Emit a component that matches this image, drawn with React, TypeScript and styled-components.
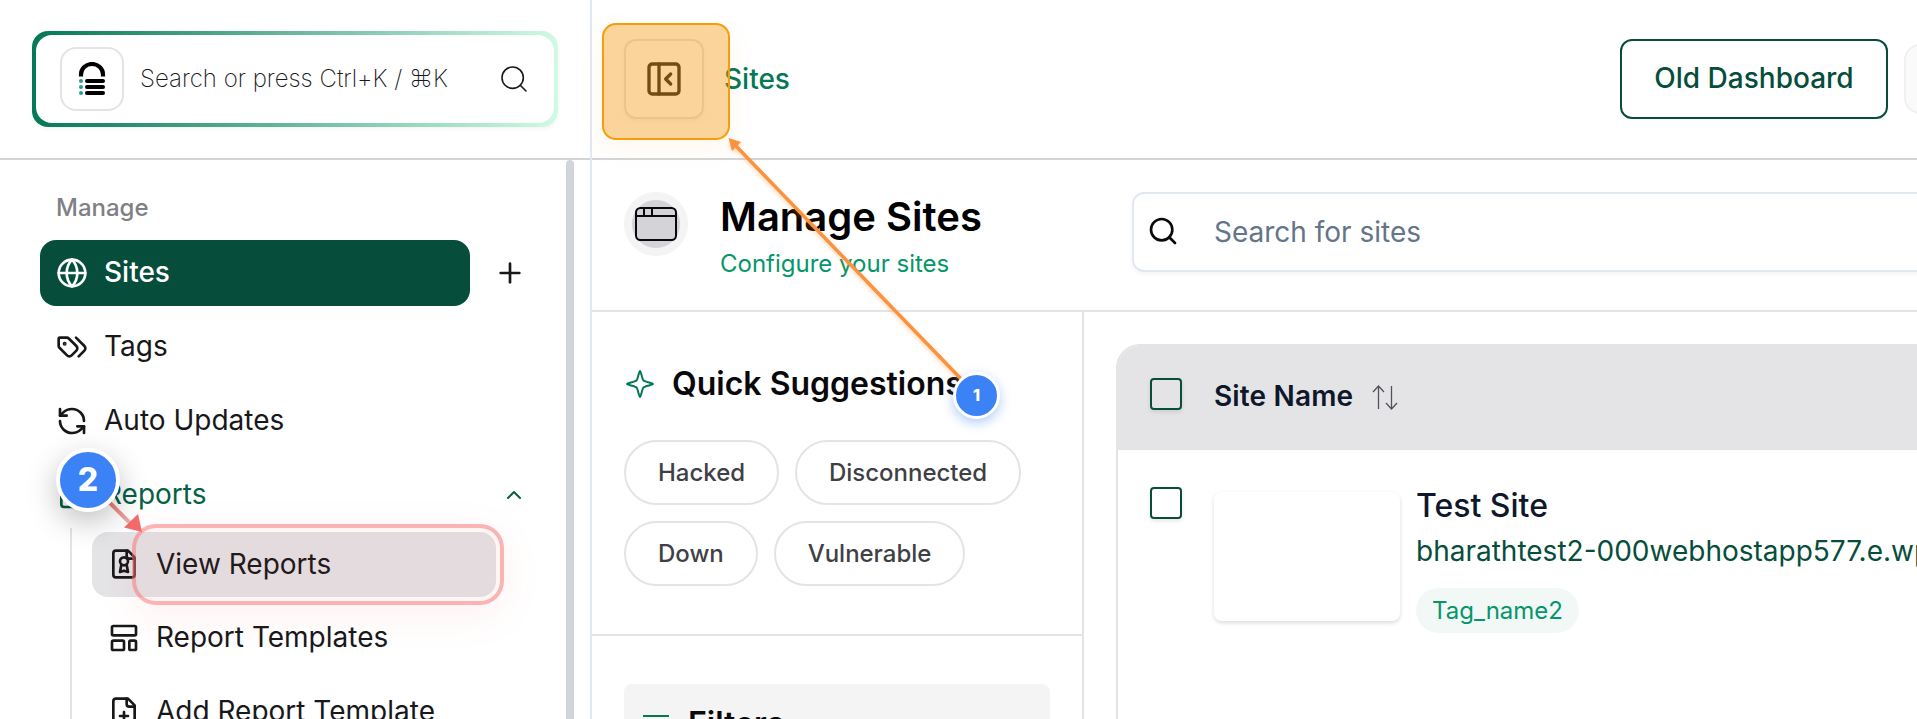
import React from 'react';
import styled, { createGlobalStyle, css } from 'styled-components';
import { Globe, RefreshCcw, Plus, ChevronUp, Search, PanelLeftClose, LayoutTemplate } from 'lucide-react';

const Global = createGlobalStyle`
  *, *::before, *::after { box-sizing: border-box; }
  html, body { margin: 0; background: #fff; }
  body {
    width: 100vw;
    height: 100vh;
    overflow: hidden;
    font-family: Inter, "Noto Sans", sans-serif;
    font-size: 28px;
    line-height: 40px;
    color: #18181b;
    -webkit-font-smoothing: antialiased;
  }
  svg { display: block; flex-shrink: 0; }
`;

const Page = styled.div`
  position: relative;
  display: flex;
  width: 100%;
  height: 719px;
  overflow: hidden;
  background: #fff;
`;

/* ---------- sidebar ---------- */
const Sidebar = styled.aside`
  display: flex;
  flex-direction: column;
  flex: none;
  width: 592px;
  height: 719px;
  border-right: 2px solid #e2e8f0;
`;

const SidebarTop = styled.div`
  flex: none;
  height: 160px;
  padding: 31px 0 0 32px;
  border-bottom: 2px solid #d4d4d8;
`;

const CommandFrame = styled.div`
  width: 526px;
  height: 96px;
  padding: 4px;
  border-radius: 16px;
  background: linear-gradient(90deg, #047857, #d1fae5);
  box-shadow: 0 2px 4px rgba(0, 0, 0, 0.05);
`;

const CommandBox = styled.div`
  display: flex;
  align-items: center;
  height: 88px;
  padding: 0 24px;
  border-radius: 16px;
  background: #fff;
`;

const LogoTile = styled.div`
  display: flex;
  align-items: center;
  justify-content: center;
  width: 64px;
  height: 64px;
  border: 2px solid #e4e4e7;
  border-radius: 16px;
`;

const CommandText = styled.span`
  flex: 1;
  margin-left: 16px;
  font-size: 24px;
  font-weight: 200;
  line-height: 32px;
  color: #18181b;
  white-space: nowrap;
`;

const SidebarBody = styled.div`
  display: flex;
  flex: 1;
  min-height: 0;
  justify-content: space-between;
  padding-right: 16px;
`;

const Nav = styled.nav`
  width: 500px;
  margin-left: 40px;
`;

const ScrollThumb = styled.div`
  width: 8px;
  height: 620px;
  border-radius: 4px;
  background: #d1d5db;
`;

const NavLabel = styled.div`
  height: 80px;
  padding: 32px 16px 0;
  font-size: 24px;
  font-weight: 500;
  line-height: 32px;
  color: #7f7f85;
`;

const NavRow = styled.div`
  display: flex;
  align-items: center;
  height: 66px;
  margin-bottom: 8px;
`;

const NavItem = styled.a<{ $active?: boolean; $open?: boolean }>`
  display: flex;
  align-items: center;
  gap: 16px;
  width: 430px;
  height: 66px;
  padding: 0 16px;
  border-radius: 16px;
  white-space: nowrap;
  ${p => p.$active && css`background: #064e3b; color: #fff; font-weight: 500;`}
  ${p => p.$open && css`color: #065f46;`}
`;

const ItemText = styled.span<{ $lift?: number }>`
  margin-bottom: ${p => p.$lift ?? 2}px;
`;

const RowAction = styled.div<{ $left: number; $green?: boolean }>`
  margin-left: ${p => p.$left}px;
  color: ${p => (p.$green ? '#065f46' : '#18181b')};
`;

const SubNav = styled.div`
  margin: -8px 0 0 30px;
  padding: 4px 0 0 20px;
  border-left: 2px solid #e4e4e7;
`;

const SubItem = styled.a<{ $selected?: boolean }>`
  display: flex;
  align-items: center;
  gap: 16px;
  width: 404px;
  height: 65px;
  margin-bottom: 9px;
  padding: 0 16px 1px;
  border-radius: 16px;
  background: ${p => (p.$selected ? '#e4e4e7' : 'transparent')};
  white-space: nowrap;
`;

/* ---------- main ---------- */
const Main = styled.main`
  display: flex;
  flex: 1;
  flex-direction: column;
  min-width: 0;
`;

const TopBar = styled.header`
  display: flex;
  align-items: center;
  flex: none;
  height: 160px;
  padding-left: 32px;
  border-bottom: 2px solid #d4d4d8;
`;

const CollapseButton = styled.div`
  display: flex;
  align-items: center;
  justify-content: center;
  width: 80px;
  height: 80px;
  border: 2px solid #e4e4e7;
  border-radius: 12px;
  box-shadow: 0 2px 4px rgba(0, 0, 0, 0.05);
`;

const Crumb = styled.span`
  margin-left: 20px;
  font-weight: 500;
  color: #047857;
`;

const OldDashboard = styled.div`
  display: flex;
  align-items: center;
  justify-content: center;
  flex: none;
  width: 268px;
  height: 80px;
  margin-left: auto;
  padding-bottom: 2px;
  border: 2px solid #064e3b;
  border-radius: 12px;
  font-weight: 500;
  color: #064e3b;
`;

const Account = styled.div`
  flex: none;
  width: 72px;
  height: 70px;
  margin: 0 -59px 0 16px;
  border: 2px solid #f0f0f1;
  border-radius: 16px;
  background: #fafafa;
`;

const TitleBar = styled.section`
  display: flex;
  flex: none;
  height: 152px;
  padding: 32px 0 0 32px;
  border-bottom: 2px solid #e4e4e7;
`;

const TitleBadge = styled.div`
  display: flex;
  align-items: center;
  justify-content: center;
  width: 64px;
  height: 64px;
  border: 8px solid #f4f4f5;
  border-radius: 50%;
  background: #d4d4d8;
`;

const Titles = styled.div`
  width: 412px;
  margin-left: 32px;
`;

const Title = styled.h1`
  margin: 1px 0 0;
  font-size: 40px;
  font-weight: 600;
  line-height: 48px;
  color: #000;
`;

const Subtitle = styled.p`
  margin: 7px 0 0;
  font-size: 24px;
  line-height: 32px;
  color: #059669;
`;

const SiteSearch = styled.div`
  display: flex;
  align-items: center;
  gap: 35px;
  flex: 1;
  height: 80px;
  margin-right: -20px;
  padding: 0 0 2px 13px;
  border: 2px solid #e2e8f0;
  border-radius: 12px;
  box-shadow: 0 2px 4px rgba(0, 0, 0, 0.05);
  color: #0a0a0a;
`;

const Placeholder = styled.span`
  margin-top: 2px;
  color: #64748b;
`;

const Columns = styled.div`
  display: flex;
  flex: 1;
  min-height: 0;
`;

const FilterColumn = styled.div`
  flex: none;
  width: 492px;
  border-right: 2px solid #e4e4e7;
`;

const Suggestions = styled.section`
  height: 324px;
  padding: 52px 32px 0;
  border-bottom: 2px solid #e4e4e7;
`;

const SectionHeading = styled.h2`
  display: flex;
  align-items: center;
  gap: 16px;
  margin: 0;
  font-size: 32px;
  font-weight: 600;
  line-height: 40px;
  color: #09090b;
`;

const Chips = styled.div`
  display: flex;
  flex-wrap: wrap;
  gap: 16px;
  margin-top: 36px;
`;

const Chip = styled.span`
  height: 65px;
  padding: 0 32px;
  border: 2px solid #e4e4e7;
  border-radius: 33px;
  font-size: 24px;
  font-weight: 500;
  line-height: 61px;
  letter-spacing: -0.02px;
  color: #3f3f46;
`;

const FiltersCard = styled.section`
  height: 120px;
  margin: 48px 32px 0;
  padding: 20px 16px;
  border-radius: 8px;
  background: #f4f4f4;
`;

const TableWrap = styled.div`
  flex: 1;
  min-width: 0;
  padding: 32px 0 0 32px;
`;

const Table = styled.div`
  width: 900px;
  height: 500px;
  overflow: hidden;
  border: 2px solid #e4e4e7;
  border-radius: 24px;
`;

const TableHead = styled.div`
  display: flex;
  align-items: center;
  height: 104px;
  padding: 0 0 2px 32px;
  background: #e4e4e6;
  font-weight: 600;
  color: #0f172a;
`;

const HeadLabel = styled.span`
  margin: 0 16px 2px 32px;
  letter-spacing: 0.15px;
`;

const Checkbox = styled.span<{ $lift?: number }>`
  flex: none;
  width: 32px;
  height: 32px;
  margin-bottom: ${p => p.$lift ?? 0}px;
  border: 2px solid #064e3b;
  border-radius: 4px;
  box-shadow: 0 2px 4px rgba(0, 0, 0, 0.1);
`;

const SiteRow = styled.div`
  display: flex;
  align-items: flex-start;
  padding: 37px 0 0 32px;
`;

const Thumb = styled.div`
  flex: none;
  width: 186px;
  height: 129px;
  margin: 5px 16px 0 32px;
  border-radius: 8px;
  box-shadow: 0 2px 4px rgba(0, 0, 0, 0.14);
`;

const SiteInfo = styled.div`
  display: flex;
  flex-direction: column;
  align-items: flex-start;
  white-space: nowrap;
`;

const SiteTitle = styled.span`
  margin-top: -3px;
  font-size: 32px;
  font-weight: 500;
  line-height: 44px;
  color: #0f172a;
`;

const SiteUrl = styled.span`
  margin-top: 3px;
  color: #064e3b;
`;

const Tag = styled.span`
  height: 45px;
  margin-top: 17px;
  padding: 0 16px;
  border-radius: 23px;
  background: #f1f8f6;
  font-size: 24px;
  line-height: 45px;
  color: #059669;
`;

/* ---------- tour overlay ---------- */
const CollapseHighlight = styled.div`
  position: absolute;
  left: 602px;
  top: 23px;
  width: 128px;
  height: 117px;
  border: 2px solid #f59e0b;
  border-radius: 14px;
  background: rgba(245, 150, 11, 0.41);
  box-shadow: 0 8px 24px rgba(245, 158, 11, 0.08);
`;

const ReportsHighlight = styled.div`
  position: absolute;
  left: 132px;
  top: 524px;
  width: 372px;
  height: 81px;
  border: 4px solid rgba(248, 113, 113, 0.5);
  border-radius: 24px;
  background: rgba(239, 68, 68, 0.05);
  box-shadow: 0 10px 40px rgba(239, 68, 68, 0.08);
`;

const Arrows = styled.svg`
  position: absolute;
  left: 0;
  top: 0;
  pointer-events: none;
`;

const Marker = styled.div<{ $x: number; $y: number; $size: number; $ring: number; $font: number; $shadow: string }>`
  position: absolute;
  left: ${p => p.$x - p.$size / 2}px;
  top: ${p => p.$y - p.$size / 2}px;
  display: flex;
  align-items: center;
  justify-content: center;
  width: ${p => p.$size}px;
  height: ${p => p.$size}px;
  border: ${p => p.$ring}px solid #fff;
  border-radius: 50%;
  background: #3b82f6;
  box-shadow: ${p => p.$shadow};
  font-size: ${p => p.$font}px;
  font-weight: 800;
  line-height: 1;
  color: #fff;
`;

const LockLogo = () => (
  <svg width="28" height="34" viewBox="0 0 28 34">
    <path d="M3 14.5V12.5a11 10.5 0 0 1 22 0v2" fill="none" stroke="#000" strokeWidth="4.2" />
    {[19, 25, 31].map(y => (
      <g key={y}>
        <rect x="7" y={y - 2} width="20" height="4" rx="2" fill="#000" />
        <circle cx="3" cy={y} r="2" fill="#2a9d8f" />
      </g>
    ))}
  </svg>
);

const WindowIcon = () => (
  <svg width="42" height="34" viewBox="0 0 42 34" fill="none" stroke="#09090b" strokeWidth="2">
    <rect x="1" y="1" width="40" height="32" rx="4.5" />
    <path d="M1 9H41M9 1V9M17 1V9" />
  </svg>
);

const TagsIcon = () => (
  <svg width="32" height="32" viewBox="0 0 24 24" fill="none" stroke="currentColor" strokeWidth="2" strokeLinecap="round" strokeLinejoin="round">
    <path d="m15 5 6.3 6.3a2.4 2.4 0 0 1 0 3.4L17 19" />
    <path d="M9.586 5.586A2 2 0 0 0 8.172 5H3a1 1 0 0 0-1 1v5.172a2 2 0 0 0 .586 1.414L8.29 18.290a2.426 2.426 0 0 0 3.420 0l3.580-3.580a2.426 2.426 0 0 0 0-3.420z" />
    <circle cx="6.5" cy="9.5" r=".5" fill="currentColor" />
  </svg>
);

const FileBadge = () => (
  <svg width="32" height="32" viewBox="0 0 24 24" fill="none" stroke="currentColor" strokeWidth="2" strokeLinecap="round" strokeLinejoin="round">
    <path d="M15 2H6a2 2 0 0 0-2 2v16a2 2 0 0 0 2 2h12a2 2 0 0 0 2-2V7Z" />
    <path d="M14 2v4a2 2 0 0 0 2 2h4" />
    <circle cx="12" cy="10" r="3" />
    <path d="m14 12.500 1 5.500-3-1-3 1 1-5.500" />
  </svg>
);

const FileAdd = () => (
  <svg width="32" height="32" viewBox="0 0 24 24" fill="none" stroke="currentColor" strokeWidth="2" strokeLinecap="round" strokeLinejoin="round">
    <path d="M15 2H6a2 2 0 0 0-2 2v16a2 2 0 0 0 2 2h12a2 2 0 0 0 2-2V7Z" />
    <path d="M14 2v4a2 2 0 0 0 2 2h4M9 15h6M12 12v6" />
  </svg>
);

const ReportIcon = () => (
  <svg width="32" height="32" viewBox="0 0 24 24" fill="none" stroke="currentColor" strokeWidth="2" strokeLinecap="round" strokeLinejoin="round">
    <rect x="4" y="3" width="17" height="18" rx="2" />
    <path d="M8 17v-5M12 17V8M16 17v-3" />
  </svg>
);

const Spark = () => (
  <svg width="32" height="32" viewBox="0 0 32 32" fill="none" stroke="#047857" strokeWidth="2" strokeLinejoin="round">
    <path d="M16 3C17 3 18 11 19.500 12.500S29 15 29 16S21 18 19.500 19.500S17 29 16 29S14 21 12.500 19.500S3 17 3 16S11 14 12.500 12.500S15 3 16 3Z" />
  </svg>
);

const SortIcon = () => (
  <svg width="32" height="32" viewBox="0 0 32 32" fill="none" stroke="#52525b" strokeWidth="1.300">
    <path d="M9.500 28V5M4 11l5.500-6L15 11M22.500 5v23M17 22l5.500 6L28 22" />
  </svg>
);

const MenuIcon = () => (
  <svg width="32" height="32" viewBox="0 0 32 32" fill="none" stroke="#047857" strokeWidth="2">
    <path d="M3 8H29M7 16H25M11 24H21" />
  </svg>
);

export default function App() {
  return (
    <Page>
      <Global />
      <Sidebar>
        <SidebarTop>
          <CommandFrame>
            <CommandBox>
              <LogoTile><LockLogo /></LogoTile>
              <CommandText>Search or press Ctrl+K / ⌘K</CommandText>
              <Search size={32} strokeWidth={1.2} color="#18181b" />
            </CommandBox>
          </CommandFrame>
        </SidebarTop>
        <SidebarBody>
          <Nav>
            <NavLabel>Manage</NavLabel>
            <NavRow>
              <NavItem $active><Globe size={32} /><ItemText>Sites</ItemText></NavItem>
              <RowAction $left={24}><Plus size={32} /></RowAction>
            </NavRow>
            <NavRow><NavItem><TagsIcon /><ItemText>Tags</ItemText></NavItem></NavRow>
            <NavRow><NavItem><RefreshCcw size={32} /><ItemText>Auto Updates</ItemText></NavItem></NavRow>
            <NavRow>
              <NavItem $open><ReportIcon /><ItemText>Reports</ItemText></NavItem>
              <RowAction $left={32} $green><ChevronUp size={24} /></RowAction>
            </NavRow>
            <SubNav>
              <SubItem $selected><FileBadge /><ItemText $lift={0}>View Reports</ItemText></SubItem>
              <SubItem><LayoutTemplate size={32} /><ItemText>Report Templates</ItemText></SubItem>
              <SubItem><FileAdd /><ItemText>Add Report Template</ItemText></SubItem>
            </SubNav>
          </Nav>
          <ScrollThumb />
        </SidebarBody>
      </Sidebar>

      <Main>
        <TopBar>
          <CollapseButton><PanelLeftClose size={40} color="#18181b" /></CollapseButton>
          <Crumb>Sites</Crumb>
          <OldDashboard>Old Dashboard</OldDashboard>
          <Account />
        </TopBar>
        <TitleBar>
          <TitleBadge><WindowIcon /></TitleBadge>
          <Titles>
            <Title>Manage Sites</Title>
            <Subtitle>Configure your sites</Subtitle>
          </Titles>
          <SiteSearch>
            <Search size={32} />
            <Placeholder>Search for sites</Placeholder>
          </SiteSearch>
        </TitleBar>
        <Columns>
          <FilterColumn>
            <Suggestions>
              <SectionHeading><Spark />Quick Suggestions</SectionHeading>
              <Chips>
                <Chip>Hacked</Chip>
                <Chip>Disconnected</Chip>
                <Chip>Down</Chip>
                <Chip>Vulnerable</Chip>
              </Chips>
            </Suggestions>
            <FiltersCard>
              <SectionHeading><MenuIcon />Filters</SectionHeading>
            </FiltersCard>
          </FilterColumn>
          <TableWrap>
            <Table>
              <TableHead>
                <Checkbox $lift={6} />
                <HeadLabel>Site Name</HeadLabel>
                <SortIcon />
              </TableHead>
              <SiteRow>
                <Checkbox />
                <Thumb />
                <SiteInfo>
                  <SiteTitle>Test Site</SiteTitle>
                  <SiteUrl>bharathtest2-000webhostapp577.e.wpstage.net</SiteUrl>
                  <Tag>Tag_name2</Tag>
                </SiteInfo>
              </SiteRow>
            </Table>
          </TableWrap>
        </Columns>
      </Main>

      <CollapseHighlight />
      <ReportsHighlight />
      <Arrows width="1000" height="560" viewBox="0 0 1000 560">
        <defs>
          <filter id="glow" x="-10%" y="-10%" width="120%" height="120%">
            <feDropShadow dx="0" dy="2" stdDeviation="2" floodColor="#fb923c" floodOpacity="0.4" />
          </filter>
          <linearGradient id="fade" gradientUnits="userSpaceOnUse" x1="111" y1="504" x2="136" y2="528">
            <stop offset="0" stopColor="#ef7c7c" />
            <stop offset="1" stopColor="#e9c0c0" />
          </linearGradient>
        </defs>
        <g filter="url(#glow)">
          <path d="M734 144L964 382" stroke="#fb923c" strokeWidth="3.500" />
          <path d="M728.500 138L741 142L732 151Z" fill="#fb923c" />
        </g>
        <path d="M110 503L133 526" stroke="url(#fade)" strokeWidth="4" />
        <path d="M142 532L124 527.500L138 514Z" fill="#f46b6b" />
      </Arrows>
      <Marker $x={976.5} $y={395} $size={47} $ring={3} $font={16} $shadow="0 4px 12px rgba(59,130,246,.4)">1</Marker>
      <Marker $x={88} $y={480} $size={64} $ring={4} $font={32} $shadow="0 10px 30px rgba(0,0,0,.25)">2</Marker>
    </Page>
  );
}
